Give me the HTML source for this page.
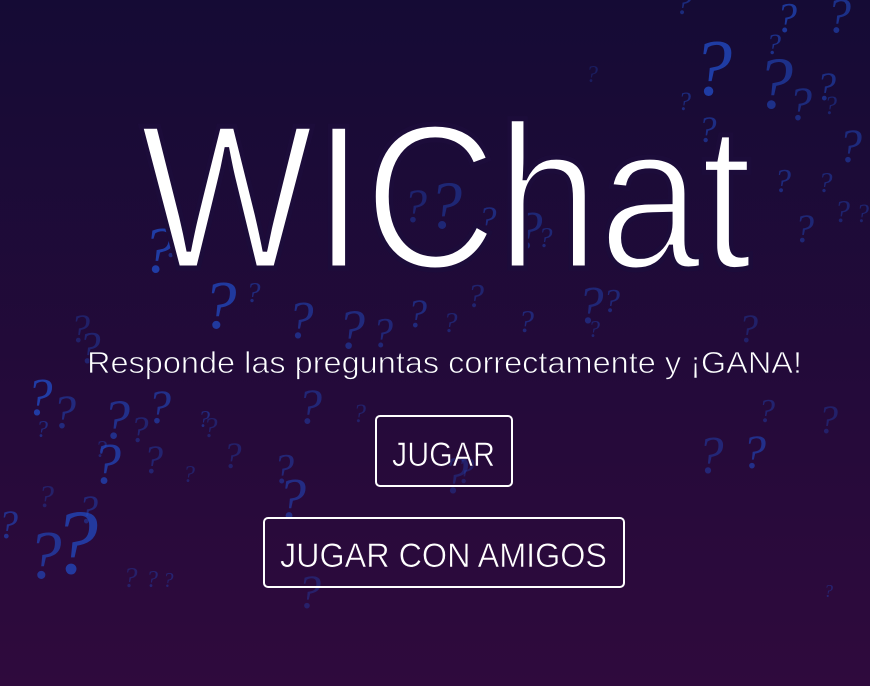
<!DOCTYPE html>
<html><head><meta charset="utf-8"><style>
html,body{margin:0;padding:0;width:870px;height:686px;overflow:hidden;background:linear-gradient(#150b35,#2f0a3d);}
svg{display:block}
.q{font-family:"Liberation Serif",serif;font-style:italic;font-weight:normal;fill:#2149c0}
</style></head><body>
<svg width="870" height="686" viewBox="0 0 870 686" xmlns="http://www.w3.org/2000/svg">
<g class="q">
<text x="675" y="14" font-size="34" opacity=".5">?</text>
<text x="826" y="32" font-size="50" opacity=".6">?</text>
<text x="776" y="32" font-size="42" opacity=".7">?</text>
<text x="766" y="54" font-size="30" opacity=".6">?</text>
<text x="692" y="95" font-size="80" opacity=".8">?</text>
<text x="756" y="108" font-size="74" opacity=".6">?</text>
<text x="788" y="120" font-size="48" opacity=".5">?</text>
<text x="816" y="100" font-size="40" opacity=".55">?</text>
<text x="824" y="114" font-size="26" opacity=".4">?</text>
<text x="678" y="110" font-size="26" opacity=".5">?</text>
<text x="586" y="82" font-size="24" opacity=".3">?</text>
<text x="698" y="142" font-size="37" opacity=".55">?</text>
<text x="838" y="162" font-size="48" opacity=".5">?</text>
<text x="774" y="192" font-size="34" opacity=".5">?</text>
<text x="818" y="192" font-size="29" opacity=".45">?</text>
<text x="428" y="228" font-size="68" opacity=".45">?</text>
<text x="403" y="222" font-size="48" opacity=".4">?</text>
<text x="478" y="232" font-size="37" opacity=".5">?</text>
<text x="516" y="248" font-size="53" opacity=".45">?</text>
<text x="538" y="247" font-size="29" opacity=".45">?</text>
<text x="568" y="222" font-size="32" opacity=".4">?</text>
<text x="794" y="242" font-size="40" opacity=".45">?</text>
<text x="834" y="222" font-size="32" opacity=".4">?</text>
<text x="856" y="222" font-size="26" opacity=".4">?</text>
<text x="142" y="272" font-size="66" opacity=".8">?</text>
<text x="163" y="257" font-size="37" opacity=".5">?</text>
<text x="202" y="328" font-size="69" opacity=".75">?</text>
<text x="246" y="302" font-size="29" opacity=".5">?</text>
<text x="287" y="338" font-size="53" opacity=".55">?</text>
<text x="337" y="348" font-size="56" opacity=".5">?</text>
<text x="372" y="347" font-size="42" opacity=".45">?</text>
<text x="407" y="327" font-size="40" opacity=".5">?</text>
<text x="443" y="332" font-size="29" opacity=".4">?</text>
<text x="467" y="307" font-size="34" opacity=".4">?</text>
<text x="518" y="332" font-size="32" opacity=".45">?</text>
<text x="577" y="323" font-size="53" opacity=".45">?</text>
<text x="603" y="312" font-size="34" opacity=".45">?</text>
<text x="588" y="337" font-size="24" opacity=".4">?</text>
<text x="70" y="342" font-size="40" opacity=".35">?</text>
<text x="78" y="363" font-size="45" opacity=".4">?</text>
<text x="26" y="415" font-size="53" opacity=".8">?</text>
<text x="52" y="428" font-size="48" opacity=".5">?</text>
<text x="36" y="437" font-size="24" opacity=".5">?</text>
<text x="102" y="438" font-size="56" opacity=".6">?</text>
<text x="147" y="423" font-size="48" opacity=".6">?</text>
<text x="130" y="442" font-size="37" opacity=".4">?</text>
<text x="198" y="427" font-size="24" opacity=".5">?</text>
<text x="203" y="437" font-size="29" opacity=".35">?</text>
<text x="92" y="483" font-size="58" opacity=".7">?</text>
<text x="95" y="457" font-size="24" opacity=".4">?</text>
<text x="143" y="473" font-size="40" opacity=".4">?</text>
<text x="183" y="482" font-size="24" opacity=".35">?</text>
<text x="223" y="468" font-size="37" opacity=".35">?</text>
<text x="273" y="483" font-size="42" opacity=".45">?</text>
<text x="277" y="518" font-size="58" opacity=".55">?</text>
<text x="297" y="423" font-size="50" opacity=".45">?</text>
<text x="353" y="422" font-size="26" opacity=".35">?</text>
<text x="38" y="507" font-size="32" opacity=".35">?</text>
<text x="-2" y="538" font-size="40" opacity=".6">?</text>
<text x="52" y="573" font-size="92" opacity=".75">?</text>
<text x="27" y="578" font-size="69" opacity=".65">?</text>
<text x="78" y="523" font-size="40" opacity=".45">?</text>
<text x="123" y="587" font-size="29" opacity=".35">?</text>
<text x="146" y="587" font-size="24" opacity=".4">?</text>
<text x="163" y="587" font-size="21" opacity=".4">?</text>
<text x="297" y="608" font-size="48" opacity=".35">?</text>
<text x="442" y="493" font-size="53" opacity=".35">?</text>
<text x="456" y="483" font-size="37" opacity=".3">?</text>
<text x="697" y="473" font-size="53" opacity=".45">?</text>
<text x="742" y="468" font-size="48" opacity=".6">?</text>
<text x="758" y="422" font-size="34" opacity=".4">?</text>
<text x="818" y="433" font-size="40" opacity=".35">?</text>
<text x="824" y="597" font-size="18" opacity=".4">?</text>
<text x="738" y="342" font-size="40" opacity=".35">?</text>
</g>
<text x="140" y="268" font-family="Liberation Sans,sans-serif" font-size="206" fill="#fff" stroke="#1c0c3a" stroke-width="5" textLength="612" lengthAdjust="spacingAndGlyphs">WIChat</text>
<text x="87" y="373" font-family="Liberation Sans,sans-serif" font-size="31" fill="#fff" stroke="#200b3b" stroke-width=".8" textLength="715" lengthAdjust="spacingAndGlyphs">Responde las preguntas correctamente y ¡GANA!</text>
<rect x="376" y="416" width="136" height="70" rx="4" fill="none" stroke="#fff" stroke-width="2"/>
<text x="392" y="466" font-family="Liberation Sans,sans-serif" font-size="34" fill="#fff" stroke="#2a0a3c" stroke-width=".6" textLength="103" lengthAdjust="spacingAndGlyphs">JUGAR</text>
<rect x="264" y="518" width="360" height="69" rx="4" fill="none" stroke="#fff" stroke-width="2"/>
<text x="280" y="567" font-family="Liberation Sans,sans-serif" font-size="34" fill="#fff" stroke="#2c0a3c" stroke-width=".6" textLength="327" lengthAdjust="spacingAndGlyphs">JUGAR CON AMIGOS</text>
</svg>
</body></html>
